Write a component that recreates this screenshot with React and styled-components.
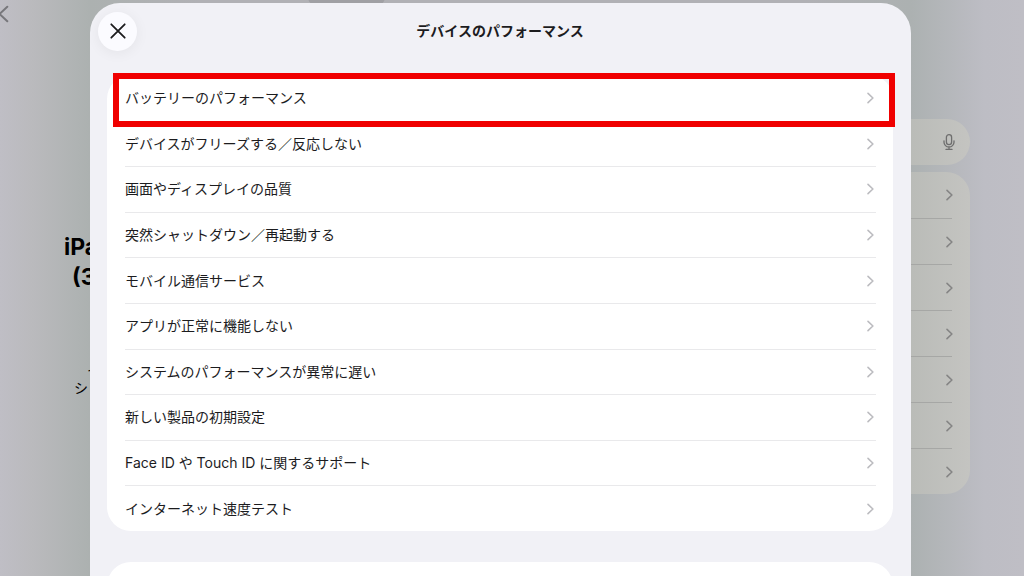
import React, { useState } from 'react';
import styled, { createGlobalStyle } from 'styled-components';

const GlobalStyle = createGlobalStyle`
    * { box-sizing: border-box; }
    body { margin: 0; overflow: hidden; color: #1c1c1e; font-family: Inter, "Noto Sans CJK JP", sans-serif; }
    button, input { font: inherit; color: inherit; border: none; background: none; padding: 0; }
    h1, h2, p, ul { margin: 0; padding: 0; }
    ul { list-style: none; }
`;

const Page = styled.div`
    position: relative;
    height: 100vh;
    overflow: hidden;
    background: linear-gradient(90deg, #bfbec5 0px, #bababd 32px, #acb1b0 90px, #b1b1b5 200px, #b1b1b5 calc(100% - 220px), #acb1b1 calc(100% - 113px), #bdbdc4 calc(100% - 40px), #bfbec5 100%);
`;
const Background = styled.div` display: flex; justify-content: space-between; padding-right: 54px; `;
const Product = styled.section` width: 300px; `;
const BackButton = styled.button` display: block; height: 28px; margin-left: -5px; color: #77777b; `;
const ProductName = styled.h1` margin-top: 204px; padding-left: 64px; font-size: 23px; line-height: 30px; font-weight: 700; color: #000; `;
const NameLine = styled.span` display: block; padding-left: ${p => (p.$indent ? 8 : 0)}px; `;
const ProductNote = styled.p` margin-top: 69px; padding-left: 74px; font-size: 14px; line-height: 18px; color: #000; `;
const NoteLine = styled.span` display: block; padding-left: ${p => (p.$indent ? 13 : 0)}px; `;
const Topics = styled.section` width: 320px; padding-top: 119px; `;
const SearchBar = styled.div`
    display: flex;
    align-items: center;
    height: 46px;
    padding: 0 13px 0 18px;
    border-radius: 23px;
    background: linear-gradient(90deg, #b9bbb7 80%, #c4c4c1);
    color: #6e6e6e;
`;
const SearchInput = styled.input` flex: 1; min-width: 0; `;
const IconButton = styled.button` display: flex; `;
const TopicList = styled.ul` margin-top: 7px; padding: 0 18px; border-radius: 24px; background: linear-gradient(90deg, #b9bbb7 80%, #c4c4c1); `;
const Topic = styled.li`
    display: flex;
    align-items: center;
    justify-content: flex-end;
    height: 46px;
    color: #858585;
    & + & { border-top: 1px solid #a6a7a5; }
    svg { margin-right: -3px; }
`;
const Grabber = styled.div` position: absolute; top: -12px; left: 308px; width: 77px; height: 18px; border-radius: 9px; background: #a0a0a4; `;

const Sheet = styled.div`
    position: absolute;
    inset: 3px 113px 0 90px;
    overflow: hidden;
    padding: 0 18px 0 17px;
    border-radius: 30px 30px 0 0;
    background: #f1f1f6;
`;
const SheetHeader = styled.header` display: grid; grid-template-columns: 40px 1fr 40px; align-items: center; height: 56px; margin: 0 -9px 16px; `;
const SheetTitle = styled.h2` font-size: 14px; line-height: 20px; font-weight: 700; text-align: center; `;
const CloseButton = styled.button`
    display: flex;
    align-items: center;
    justify-content: center;
    width: 39px;
    height: 39px;
    border-radius: 50%;
    background: #fbfbff;
    box-shadow: 0 2px 14px rgba(0, 0, 0, 0.06);
    cursor: pointer;
`;
const Card = styled.ul` display: grid; grid-auto-rows: 1fr; min-height: ${p => p.$minHeight}px; padding: 0 17px 0 18px; border-radius: 24px; background: #fff; & + & { margin-top: 31px; } `;
const Row = styled.li` position: relative; display: grid; & + & { border-top: 1px solid #e9e9eb; } `;
const RowButton = styled.button` display: flex; align-items: center; justify-content: space-between; font-size: 14px; line-height: 20px; text-align: left; cursor: pointer; `;
const ChevronBox = styled.span` display: flex; color: #bcbcc0; `;
const Highlight = styled.span` position: absolute; z-index: 1; inset: -2px -19px -6px -12px; border: 6px solid #f00000; pointer-events: none; `;

const Chevron = () => (
    <svg width="12" height="14" viewBox="0 0 12 14" fill="none" stroke="currentColor" strokeWidth="1.6" strokeLinecap="round" strokeLinejoin="round" aria-hidden="true">
        <path d="M4 2.3 L8.9 7 L4 11.7" />
    </svg>
);

const items = [
    'バッテリーのパフォーマンス',
    'デバイスがフリーズする／反応しない',
    '画面やディスプレイの品質',
    '突然シャットダウン／再起動する',
    'モバイル通信サービス',
    'アプリが正常に機能しない',
    'システムのパフォーマンスが異常に遅い',
    '新しい製品の初期設定',
    'Face ID や Touch ID に関するサポート',
    'インターネット速度テスト',
];

const App = () => {
    const [selected, setSelected] = useState(0);

    return (
        <Page>
            <GlobalStyle />
            <Background>
                <Product>
                    <BackButton type="button">
                        <svg width="16" height="28" viewBox="0 0 16 28" fill="none" stroke="currentColor" strokeWidth="2" strokeLinecap="round" strokeLinejoin="round"><path d="M12.3 6.8 L4.5 14 L12.3 21.2" /></svg>
                    </BackButton>
                    <ProductName><NameLine>iPad</NameLine><NameLine $indent>(3</NameLine></ProductName>
                    <ProductNote><NoteLine $indent>イ</NoteLine><NoteLine>シ</NoteLine></ProductNote>
                </Product>
                <Topics>
                    <SearchBar>
                        <SearchInput type="search" />
                        <IconButton type="button">
                            <svg width="16" height="20" viewBox="0 0 16 20" fill="none" stroke="currentColor" strokeWidth="1.3" strokeLinecap="round">
                                <rect x="5.4" y="2.6" width="5.2" height="10" rx="2.6" />
                                <path d="M3 8.8 V10.2 A5 4.8 0 0 0 13 10.2 V8.8 M8 15 V17.4 M5 17.4 H11" />
                            </svg>
                        </IconButton>
                    </SearchBar>
                    <TopicList>
                        {[0, 1, 2, 3, 4, 5, 6].map(n => <Topic key={n}><Chevron /></Topic>)}
                    </TopicList>
                </Topics>
            </Background>
            <Grabber />
            <Sheet role="dialog" aria-labelledby="sheet-title">
                <SheetHeader>
                    <CloseButton type="button">
                        <svg width="18" height="18" viewBox="0 0 18 18" fill="none" stroke="currentColor" strokeWidth="1.8" strokeLinecap="round"><path d="M2.3 2.3 L15.7 15.7 M15.7 2.3 L2.3 15.7" /></svg>
                    </CloseButton>
                    <SheetTitle id="sheet-title">デバイスのパフォーマンス</SheetTitle>
                </SheetHeader>
                <Card $minHeight={456}>
                    {items.map((item, i) => (
                        <Row key={item}>
                            <RowButton type="button" onClick={() => setSelected(i)}>
                                {item}
                                <ChevronBox><Chevron /></ChevronBox>
                            </RowButton>
                            {selected === i && <Highlight />}
                        </Row>
                    ))}
                </Card>
                <Card $minHeight={92} />
            </Sheet>
        </Page>
    );
};
export default App;
